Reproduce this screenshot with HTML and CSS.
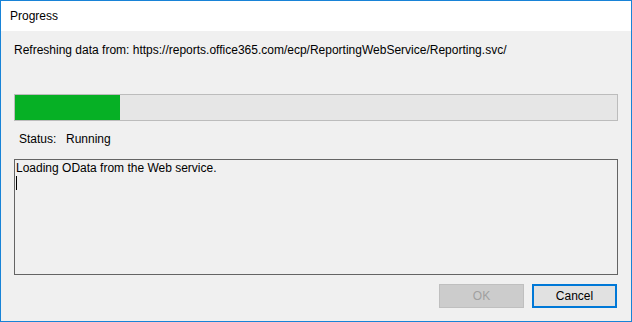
FILE: index.html
```html
<!DOCTYPE html>
<html lang="en">
<head>
    <meta charset="UTF-8">
    <title>Progress</title>
    <link rel="stylesheet" href="styles.css">
</head>
<body>
    <div class="window">
        <div class="titlebar">Progress</div>
        <div class="content">
            <div class="source">Refreshing data from: https://reports.office365.com/ecp/ReportingWebService/Reporting.svc/</div>
            <div class="progress">
                <div class="fill" style="width: 105px;"></div>
            </div>
            <div class="status">
                <span class="label">Status:</span>
                <span class="value">Running</span>
            </div>
            <div class="log">
                <div>Loading OData from the Web service.</div>
                <div class="caret"></div>
            </div>
            <div class="buttons">
                <button type="button" class="btn" disabled>OK</button>
                <button type="button" class="btn default">Cancel</button>
            </div>
        </div>
    </div>
</body>
</html>
```

FILE: styles.css
```css
body {
    margin: 0;
}

body * {
    font-family: "Liberation Sans", Arial, sans-serif;
    font-size: 12px;
}

div.window {
    width: 632px;
    height: 322px;
    box-sizing: border-box;
    border: 1px solid #1883d7;
    background-color: #f0f0f0;
    color: #000;
}

div.window div.titlebar {
    height: 30px;
    line-height: 30px;
    background-color: #fff;
    padding-left: 9px;
}

div.content {
    padding: 0 13px;
}

div.content div.source {
    margin-top: 11px;
    height: 16px;
    line-height: 16px;
}

div.content div.progress {
    margin-top: 36px;
    height: 27px;
    box-sizing: border-box;
    border: 1px solid #bcbcbc;
    background-color: #e6e6e6;
}

div.progress div.fill {
    height: 100%;
    background-color: #06b025;
}

div.content div.status {
    margin-top: 10px;
    padding-left: 5px;
    height: 16px;
    line-height: 16px;
    display: flex;
}

div.status span.label {
    width: 47px;
}

div.content div.log {
    margin-top: 12px;
    height: 116px;
    box-sizing: border-box;
    border: 1px solid #646464;
    padding: 0 1px;
    line-height: 16px;
}

div.log div.caret {
    width: 1px;
    height: 14px;
    background-color: #000;
}

div.content div.buttons {
    margin-top: 9px;
    display: flex;
    justify-content: flex-end;
    gap: 8px;
    padding-right: 1px;
}

.btn {
    width: 85px;
    height: 24px;
    box-sizing: border-box;
    border: 1px solid #adadad;
    background-color: #e1e1e1;
    color: #000;
    padding: 0;
}

.btn:disabled {
    background-color: #cccccc;
    border-color: #bfbfbf;
    color: #a0a0a0;
}

.btn.default {
    border: 2px solid #0078d7;
}
```
